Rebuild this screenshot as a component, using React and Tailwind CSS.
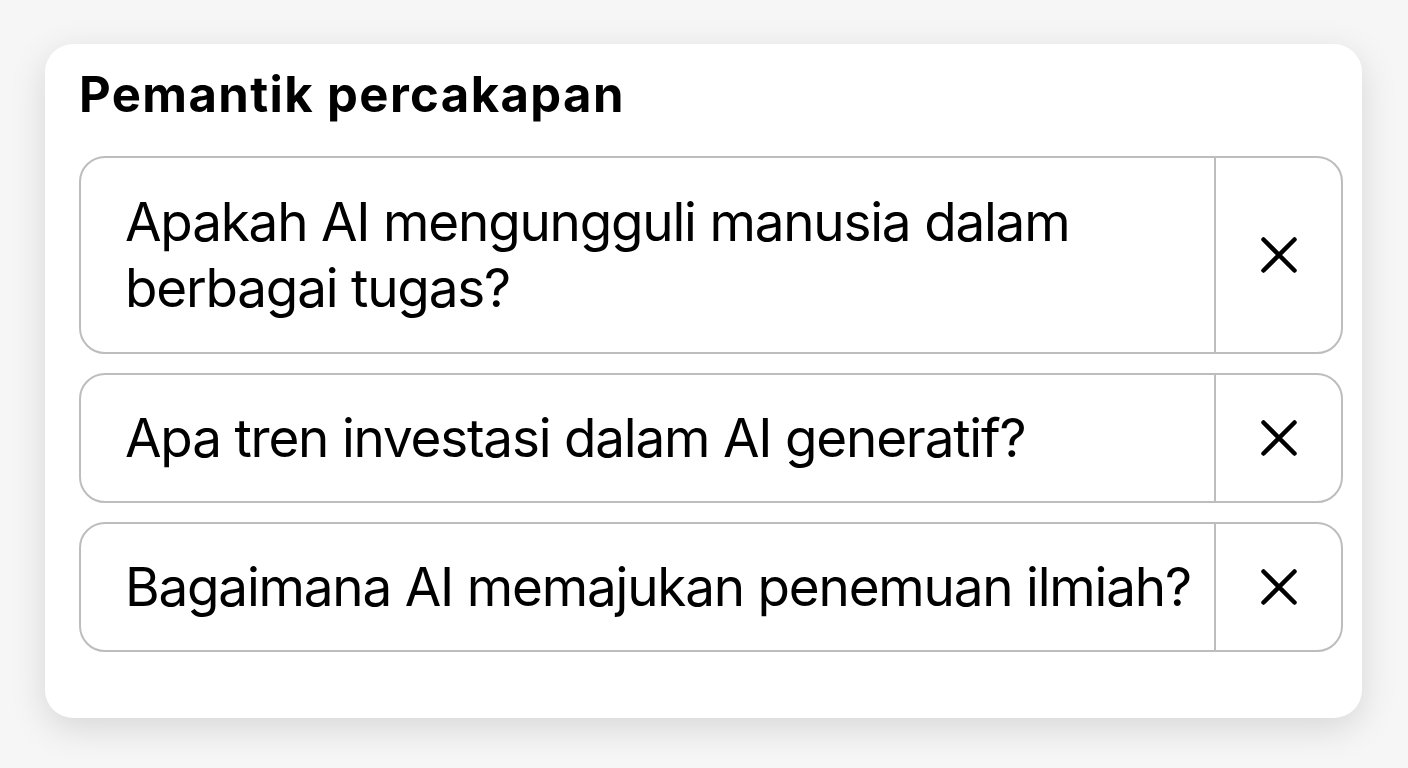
import React from "react";

const items = [
  "Apakah AI mengungguli manusia dalam berbagai tugas?",
  "Apa tren investasi dalam AI generatif?",
  "Bagaimana AI memajukan penemuan ilmiah?",
];

function XIcon() {
  return (
    <svg width="36" height="36" viewBox="0 0 36 36" fill="none">
      <path d="M2.5 2.5L33.5 33.5M33.5 2.5L2.5 33.5" stroke="#000" strokeWidth="4.5" strokeLinecap="round" />
    </svg>
  );
}

export default function App() {
  return (
    <div
      className="w-[1408px] h-[768px] bg-[#f6f6f6] pt-[44px] pl-[45px]"
      style={{ fontFamily: "Inter, 'Noto Sans', sans-serif" }}
    >
      <div className="w-[1317px] h-[674px] bg-white rounded-[28px] shadow-[0_10px_36px_rgba(0,0,0,0.13)] pl-[34px] pr-[19px] pt-[19px]">
        <h1 className="text-[49px] leading-[64px] font-bold text-black tracking-[1.4px]">
          Pemantik percakapan
        </h1>
        <div className="mt-[29px] flex flex-col gap-[19px]">
          {items.map((t, i) => (
            <div
              key={t}
              className="flex border-2 border-[#bdbdbd] rounded-[26px] overflow-hidden"
            >
              <div className={"flex-1 pl-[44px] pr-[4px] text-[53px] leading-[66px] tracking-[-1.2px] text-black " + (i === 0 ? "py-[31px]" : "py-[30px]")}>
                {t}
              </div>
              <div className="w-[127px] shrink-0 border-l-2 border-[#bdbdbd] flex items-center justify-center">
                <XIcon />
              </div>
            </div>
          ))}
        </div>
      </div>
    </div>
  );
}
